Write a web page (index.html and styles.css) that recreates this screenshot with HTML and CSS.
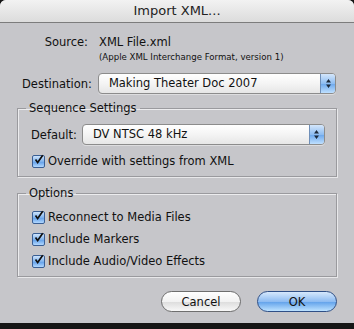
FILE: index.html
```html
<!DOCTYPE html>
<html>
<head>
    <title>Import XML...</title>
    <meta name="viewport" content="width=device-width, initial-scale=1">
    <link rel="stylesheet" href="styles.css">
</head>
<body>
    <div class="dialog">
        <div class="titlebar">Import XML...</div>
        <div class="content">
            <div class="source-row">
                <span class="source-label">Source:</span>
                <span class="source-file">XML File.xml</span>
            </div>
            <div class="source-note">(Apple XML Interchange Format, version 1)</div>

            <div class="dest-row">
                <span class="dest-label">Destination:</span>
                <div class="popup dest-popup">
                    <span class="popup-text">Making Theater Doc 2007</span>
                    <span class="popup-arrows">
                        <svg width="7" height="11" viewBox="0 0 7 11"><path d="M3.5 1 L6 4.5 H1 Z M3.5 10 L6 6.5 H1 Z" fill="#1d2a3a"/></svg>
                    </span>
                </div>
            </div>

            <fieldset class="group group-sequence">
                <legend>Sequence Settings</legend>
                <div class="default-row">
                    <span class="default-label">Default:</span>
                    <div class="popup default-popup">
                        <span class="popup-text">DV NTSC 48 kHz</span>
                        <span class="popup-arrows">
                            <svg width="7" height="11" viewBox="0 0 7 11"><path d="M3.5 1 L6 4.5 H1 Z M3.5 10 L6 6.5 H1 Z" fill="#1d2a3a"/></svg>
                        </span>
                    </div>
                </div>
                <label class="check-row check-first">
                    <span class="checkbox"><svg width="13" height="13" viewBox="0 0 13 13"><path d="M3 6.5 L5.5 10 L11.5 1.5" fill="none" stroke="#111" stroke-width="2"/></svg></span>
                    Override with settings from XML
                </label>
            </fieldset>

            <fieldset class="group group-options">
                <legend>Options</legend>
                <label class="check-row check-first">
                    <span class="checkbox"><svg width="13" height="13" viewBox="0 0 13 13"><path d="M3 6.5 L5.5 10 L11.5 1.5" fill="none" stroke="#111" stroke-width="2"/></svg></span>
                    Reconnect to Media Files
                </label>
                <label class="check-row">
                    <span class="checkbox"><svg width="13" height="13" viewBox="0 0 13 13"><path d="M3 6.5 L5.5 10 L11.5 1.5" fill="none" stroke="#111" stroke-width="2"/></svg></span>
                    Include Markers
                </label>
                <label class="check-row">
                    <span class="checkbox"><svg width="13" height="13" viewBox="0 0 13 13"><path d="M3 6.5 L5.5 10 L11.5 1.5" fill="none" stroke="#111" stroke-width="2"/></svg></span>
                    Include Audio/Video Effects
                </label>
            </fieldset>

            <div class="buttons">
                <button class="btn btn-cancel">Cancel</button>
                <button class="btn btn-ok">OK</button>
            </div>
        </div>
    </div>
</body>
</html>
```

FILE: styles.css
```css
body {
    margin: 0;
    background-color: #151515;
    font-family: "DejaVu Sans", sans-serif;
    font-size: 11.5px;
    color: #111;
}
.dialog {
    width: 354px;
    height: 323px;
    background-color: #c6c6ca;
    border-radius: 6px 6px 0 0;
    overflow: hidden;
}
.titlebar {
    height: 22px;
    line-height: 22px;
    text-align: center;
    font-size: 13px;
    color: #222;
    background: linear-gradient(#f2f2f2, #dcdcdc);
    border-bottom: 1px solid #7c7c7c;
}
.content {
    padding: 11px 17px 0 17px;
}
.source-row {
    display: flex;
    height: 16px;
    line-height: 16px;
}
.source-label {
    width: 71px;
    text-align: right;
    margin-right: 11px;
}
.source-note {
    margin: 1px 0 0 82px;
    height: 12px;
    line-height: 12px;
    font-size: 8.6px;
}
.dest-row {
    display: flex;
    align-items: center;
    margin-top: 10px;
}
.dest-label {
    margin: 0 6px 0 5px;
}
.popup {
    display: flex;
    height: 19px;
    border: 1px solid #8c8c8c;
    border-radius: 4px;
    background: linear-gradient(#ffffff, #f4f4f4 50%, #e6e6e6);
    overflow: hidden;
    box-shadow: 0 1px 0 rgba(255, 255, 255, 0.4);
}
.dest-popup {
    flex: 1;
    margin-right: 1px;
}
.popup-text {
    flex: 1;
    line-height: 19px;
    padding-left: 10px;
}
.popup-arrows {
    display: flex;
    align-items: center;
    justify-content: center;
    width: 14px;
    border-left: 1px solid #6f8fb8;
    background: linear-gradient(#d4e6fb, #8ebdf2 50%, #6aa6ec 51%, #bfe0ff);
}
.group {
    margin: 7px 0 0 0;
    padding: 0 0 8px 0;
    border: 1px solid #9a9a9e;
    box-shadow: 1px 1px 0 #e8e8ea, inset 1px 1px 0 #ececee;
}
.group legend {
    margin-left: 8px;
    padding: 0 3px;
    height: 14px;
    line-height: 14px;
}
.group-options {
    margin-top: 9px;
}
.default-row {
    display: flex;
    align-items: center;
    margin-top: 9px;
}
.default-label {
    margin: 0 5px 0 13px;
}
.default-popup {
    width: 241px;
}
.check-row {
    display: flex;
    align-items: center;
    height: 14px;
    margin: 8px 0 0 14px;
}
.check-first {
    margin-top: 9px;
}
.group-options .check-first {
    margin-top: 10px;
}
.checkbox {
    display: flex;
    width: 11px;
    height: 11px;
    margin-right: 3px;
    border: 1px solid #3a5f94;
    border-radius: 2px;
    background: linear-gradient(#cfe4fb, #7fb3ee 50%, #5c9ce8 51%, #b2d8ff);
    overflow: visible;
}
.checkbox svg {
    margin: -3px 0 0 0;
}
.buttons {
    display: flex;
    justify-content: flex-end;
    gap: 16px;
    margin: 14px 0 0 0;
}
.btn {
    width: 80px;
    height: 21px;
    border-radius: 11px;
    font-family: "DejaVu Sans", sans-serif;
    font-size: 11.5px;
    color: #111;
    padding: 0;
}
.btn-cancel {
    border: 1px solid #6e6e6e;
    background: linear-gradient(#ffffff, #f2f2f2 50%, #dcdcdc 51%, #f8f8f8);
}
.btn-ok {
    border: 1px solid #2f4f86;
    background: linear-gradient(#d6e8fc, #8ebcf2 50%, #5fa0ea 51%, #bde2ff);
}
```
